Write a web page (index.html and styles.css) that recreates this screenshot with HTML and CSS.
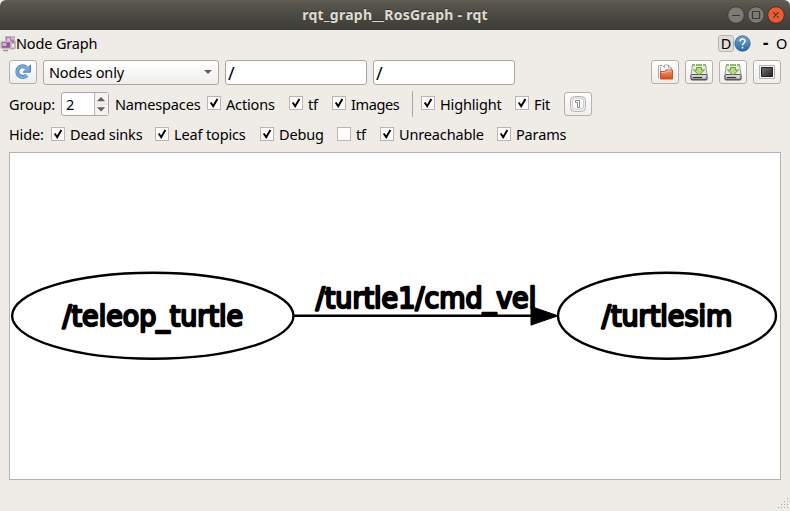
FILE: index.html
```
<!DOCTYPE html>
<html lang="en">
<head>
<meta charset="utf-8">
<title>rqt_graph__RosGraph - rqt</title>
<link rel="stylesheet" href="styles.css">
</head>
<body>
<svg class="defs" width="0" height="0">
  <defs>
    <linearGradient id="disk" x1="0" y1="0" x2="0" y2="1"><stop offset="0" stop-color="#e4e4e4"/><stop offset=".6" stop-color="#bbb"/><stop offset="1" stop-color="#555"/></linearGradient>
    <linearGradient id="folder" x1="0" y1="0" x2="0" y2="1"><stop offset="0" stop-color="#f49a72"/><stop offset="1" stop-color="#d9481e"/></linearGradient>
    <linearGradient id="help" x1="0" y1="0" x2="0" y2="1"><stop offset="0" stop-color="#74a5d2"/><stop offset="1" stop-color="#2566a4"/></linearGradient>
    <linearGradient id="screen" x1="0" y1="0" x2="1" y2="1"><stop offset="0" stop-color="#777"/><stop offset="1" stop-color="#222"/></linearGradient>
    <symbol id="tick" viewBox="0 0 14 14"><path d="M3.700 6.500L6.200 10.200L10.400 3" fill="none" stroke="#000" stroke-width="2"/></symbol>
    <symbol id="save" viewBox="0 0 18 18">
      <path d="M2.500 1.500h13l1.500 10v4.500h-16v-4.500z" fill="#e9e9e7" stroke="#999"/>
      <path d="M2 1h14v2H2z" fill="#8fbf5a"/><path d="M5 1h1v2H5zM12 1h1v2h-1z" fill="#fff"/>
      <rect x="1" y="11.500" width="16" height="5.500" rx="1" fill="url(#disk)" stroke="#444" stroke-width=".9"/>
      <path d="M3 14.500h9" stroke="#333"/><path d="M14 13.500v2" stroke="#eee"/>
      <path d="M6.500 4.500h5v2.500h3L9 12 3.500 7h3z" fill="#b7dc80" stroke="#6c9f35"/>
    </symbol>
  </defs>
</svg>
<header class="titlebar">
  <h1>rqt_graph__RosGraph - rqt</h1>
  <div class="controls">
    <svg width="60" height="20" viewBox="0 0 60 20">
      <g fill="#7d7b75" stroke="#3a3934"><circle cx="10" cy="10" r="8.300"/><circle cx="30" cy="10" r="8.300"/><circle cx="50" cy="10" r="8.300" fill="#ec5b31" stroke="#4a2d22"/></g>
      <path d="M6 10.500h8M26.500 6.500h7v7h-7zM47.300 7.300l5.400 5.400M52.700 7.300l-5.400 5.400" fill="none" stroke="#3b3a35" stroke-width="1.200"/>
    </svg>
  </div>
</header>
<div class="dock">
  <svg class="dock-icon" width="16" height="17" viewBox="0 0 16 17">
    <path d="M7 13.500h7M3 15.500h5M11 12v-2" stroke="#999" stroke-width="1.500"/>
    <rect x="5.500" y="1.500" width="9" height="7" fill="#a878aa" stroke="#bbb"/>
    <rect x="1" y="6.500" width="10" height="7" rx="1" fill="#93559a" stroke="#c6c2c4" stroke-width="1.500"/>
    <path d="M7 3h3v3H7zM11 2.500h3v2h-3z" fill="#dfbfe1"/><path d="M2.500 8h4v3h-4z" fill="#d7add9"/>
    <path d="M15 6v7l-3 1" fill="none" stroke="#aaa" stroke-width="1.500"/>
  </svg>
  <span class="dock-title">Node Graph</span>
  <span class="dock-d">D</span>
  <svg class="help" width="17" height="17" viewBox="0 0 17 17"><circle cx="8.500" cy="8.500" r="7.700" fill="url(#help)" stroke="#2b6296" stroke-width=".8"/><path d="M6 6.500C6 3.200 11 3.200 11 6.200c0 2-2.500 2.100-2.500 4.100M8.500 11.800v1.800" fill="none" stroke="#fff" stroke-width="1.600"/></svg>
  <span class="dock-min">-</span><span class="dock-float">O</span>
</div>
<div class="row tools">
  <span class="btn"><svg width="18" height="18" viewBox="0 0 18 18"><path d="M12.800 12.200A5.400 5.400 0 1 1 12.300 4.700" fill="none" stroke="#4a84bd" stroke-width="4"/><path d="M16.500 2v7.200H9.200z" fill="#6fa5da" stroke="#4a84bd"/><path d="M12.800 12.200A5.400 5.400 0 1 1 12.300 4.700L13.800 6.500" fill="none" stroke="#75aadd" stroke-width="2.400"/></svg></span>
  <span class="combo">Nodes only<i></i></span>
  <span class="field">/</span>
  <span class="field">/</span>
  <span class="btn push"><svg width="18" height="18" viewBox="0 0 18 18"><path d="M2.500 15.500v-13h4l2 2V2h4l3 3v9" fill="#fafafa" stroke="#aaa"/><path d="M4.500 4v10M12.500 2v3h3" fill="none" stroke="#aaa"/><path d="M4.500 8.500h4l1.500-1.500h6.500v9h-12z" fill="url(#folder)" stroke="#d34d25"/><path d="M5.500 9.500h4l1.500-1.500h4.500" fill="none" stroke="#f8b596"/></svg></span>
  <span class="btn"><svg width="18" height="18"><use href="#save"/></svg></span>
  <span class="btn"><svg width="18" height="18"><use href="#save"/></svg></span>
  <span class="btn"><svg width="18" height="18" viewBox="0 0 18 18"><path d="M1.500 2.500h15v13h-15z" fill="#f1f1f1" stroke="#b5b5b5"/><path d="M3.500 4.500h11v9h-11z" fill="url(#screen)" stroke="#222"/></svg></span>
</div>
<div class="row options">
  <span class="label w-group">Group:</span>
  <span class="spin"><span>2</span><svg width="14" height="22" viewBox="0 0 14 22"><path d="M2 8l4.500-4.500L11 8zM2 14.500h9L6.500 19z" fill="#60605c"/><path d="M0 11h14" stroke="#e1dfdc"/></svg></span>
  <span class="label w-names">Namespaces</span>
  <span class="check"><svg><use href="#tick"/></svg></span><span class="label w-actions">Actions</span>
  <span class="check"><svg><use href="#tick"/></svg></span><span class="label w-tf">tf</span>
  <span class="check"><svg><use href="#tick"/></svg></span><span class="label w-images">Images</span>
  <span class="divider"></span>
  <span class="check"><svg><use href="#tick"/></svg></span><span class="label w-highlight">Highlight</span>
  <span class="check"><svg><use href="#tick"/></svg></span><span class="label w-fit">Fit</span>
  <span class="btn"><svg width="18" height="18" viewBox="0 0 18 18"><rect x="1.500" y="1.500" width="15" height="15" rx="4" fill="#eee" stroke="#b5b5b5"/><rect x="3.500" y="3" width="11" height="11" rx="3" fill="#fafafa" stroke="#ccc"/><path d="M6.500 5.500h4v7h-2v-5h-2z" fill="#fff" stroke="#8b8b8b"/></svg></span>
</div>
<div class="row hide">
  <span class="label w-hide">Hide:</span>
  <span class="check"><svg><use href="#tick"/></svg></span><span class="label w-dead">Dead sinks</span>
  <span class="check"><svg><use href="#tick"/></svg></span><span class="label w-leaf">Leaf topics</span>
  <span class="check"><svg><use href="#tick"/></svg></span><span class="label w-debug">Debug</span>
  <span class="check"></span><span class="label w-tf2">tf</span>
  <span class="check"><svg><use href="#tick"/></svg></span><span class="label w-unreach">Unreachable</span>
  <span class="check"><svg><use href="#tick"/></svg></span><span class="label w-params">Params</span>
</div>
<main class="canvas">
  <svg width="770" height="326" viewBox="10 153 770 326">
    <g fill="none" stroke="#000" stroke-width="2.400"><ellipse cx="152.800" cy="315.800" rx="140.700" ry="43"/><ellipse cx="667" cy="315.800" rx="109" ry="43"/><path d="M294 315.800h240"/></g>
    <path d="M531 306.500L558 315.800L531 325.100z" stroke="#000"/>
    <g class="names">
      <text x="62.500" y="326" textLength="180.500" lengthAdjust="spacingAndGlyphs">/teleop_turtle</text>
      <text x="315.700" y="307.500" textLength="220.500" lengthAdjust="spacingAndGlyphs">/turtle1/cmd_vel</text>
      <text x="601.800" y="326" textLength="130.500" lengthAdjust="spacingAndGlyphs">/turtlesim</text>
    </g>
  </svg>
</main>
<footer class="status"><svg width="12" height="12" viewBox="0 0 12 12"><path d="M10 0h1v1h-1zM7 3h1v1H7zM10 3h1v1h-1zM4 6h1v1H4zM7 6h1v1H7zM10 6h1v1h-1zM1 9h1v1H1zM4 9h1v1H4zM7 9h1v1H7zM10 9h1v1h-1z" fill="#aaa7a2"/></svg></footer>
</body>
</html>
```
FILE: styles.css
```
* { box-sizing: border-box; }
body { margin: 0; width: 790px; height: 511px; overflow: hidden; background: #efebe7; color: #000; font: 14.500px/20px "Noto Sans", sans-serif; letter-spacing: -.15px; display: flex; flex-direction: column; }
.defs { position: absolute; }
svg { display: block; flex: none; }
.titlebar { height: 30px; flex: none; display: grid; grid-template-columns: 64px 1fr 64px; align-items: center; background: linear-gradient(#55534a, #66635a 1px, #59574e 2px, #3c3b37); border-radius: 6px 6px 0 0; }
.titlebar h1 { grid-column: 2; margin: 0; text-align: center; color: #dfdbd2; font-size: 14px; line-height: 30px; font-weight: 700; letter-spacing: .25px; text-shadow: 0 -1px #33322e; }
.controls { grid-column: 3; }
.dock { height: 28px; flex: none; display: flex; align-items: center; white-space: nowrap; padding-bottom: 2px; }
.dock-icon { width: 16px; }
.dock-title { flex: 1; }
.dock-d { width: 16px; height: 17px; border: 1px solid #b9b5b1; border-radius: 3px; background: #e0dddb; line-height: 14px; text-align: center; }
.dock-min { margin-left: 12px; width: 13px; font-weight: 700; font-size: 17px; }
.dock-float { width: 14px; }
.row { display: flex; align-items: center; flex: none; padding: 0 9px; white-space: nowrap; }
.tools { height: 28px; gap: 6px; }
.btn { width: 28px; height: 24px; flex: none; display: flex; align-items: center; justify-content: center; border: 1px solid #b4b0ab; border-radius: 3px; background: linear-gradient(#fff, #f0eeec); }
.push { margin-left: auto; }
.combo { width: 176px; height: 25px; border: 1px solid #aaa6a1; border-radius: 3px; background: linear-gradient(#fff, #f0eeec); display: flex; align-items: center; justify-content: space-between; padding: 0 6px 0 5px; }
.combo i { border: 4px solid transparent; border-top-color: #60605c; border-bottom: 0; }
.field { width: 142px; height: 25px; border: 1px solid #aaa6a1; border-radius: 3px; background: #fff; padding-left: 2px; line-height: 25px; font-size: 18px; }
.options { height: 36px; }
.options .label { margin-top: -1px; }
.spin { width: 48px; height: 24px; flex: none; display: flex; border: 1px solid #aaa6a1; border-radius: 3px; background: #fff; margin-right: 6px; }
.spin span { width: 33px; padding-left: 4px; line-height: 22px; border-right: 1px solid #b9b5b1; }
.spin svg { width: 13px; background: #f5f3f1; }
.check { width: 14px; height: 14px; flex: none; border: 1px solid #b9b5b0; background: #fff; margin-right: 5px; }
.check svg { width: 14px; height: 14px; margin: -1px; }
.label { flex: none; }
.options .check { margin-top: -2px; }
.divider { width: 9px; height: 26px; flex: none; border-left: 1px solid #aaa6a1; }
.w-group { width: 52px; }
.w-names { width: 92px; }
.w-actions { width: 63px; }
.w-tf { width: 24px; }
.w-images { width: 61px; letter-spacing: -.4px; }
.w-highlight { width: 75px; }
.w-fit { width: 30px; }
.hide { height: 24px; }
.w-hide { width: 42px; }
.w-dead { width: 85px; }
.w-leaf { width: 86px; }
.w-debug { width: 58px; }
.w-tf2 { width: 24px; }
.w-unreach { width: 98px; }
.w-params { width: 60px; }
.canvas { height: 328px; flex: none; margin: 6px 9px 0; border: 1px solid #b5b1ad; background: #fff; }
.names { font: 28px "DejaVu Sans", sans-serif; letter-spacing: 0; stroke: #000; stroke-width: 2.300px; stroke-linejoin: round; }
.status { flex: 1; display: flex; justify-content: flex-end; align-items: flex-end; padding: 0 1px 1px 0; }
```
